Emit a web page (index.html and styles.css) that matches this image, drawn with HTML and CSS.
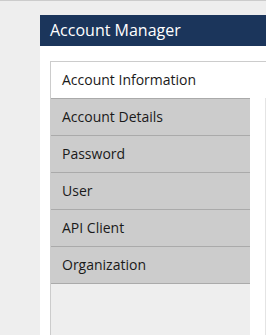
FILE: index.html
```html
<!DOCTYPE html>
<html lang="en">
<head>
    <meta charset="UTF-8">
    <title>Account Manager</title>
    <link rel="stylesheet" href="styles.css">
</head>
<body>
<div class="panel">
    <h3 class="panel-title">Account Manager</h3>
    <div class="panel-body">
        <div class="tabs">
            <ul class="tab-nav">
                <li class="active">Account Information</li>
                <li>Account Details</li>
                <li>Password</li>
                <li>User</li>
                <li>API Client</li>
                <li>Organization</li>
                <li class="filler"></li>
            </ul>
            <div class="tab-content"></div>
        </div>
    </div>
</div>
</body>
</html>
```

FILE: styles.css
```css
* {
    padding: 0;
    margin: 0;
}

html, body {
    height: 100%;
}

body {
    background-color: #eeeeee;
    border-top: 1px solid #cccccc;
    box-sizing: border-box;
    font-family: "Open Sans", "Liberation Sans", sans-serif;
    overflow: hidden;
    display: flex;
    flex-direction: column;
}

li {
    list-style: none;
}

.panel {
    flex: 1;
    margin: 14px 0 0 40px;
    background-color: #ffffff;
    display: flex;
    flex-direction: column;
}

.panel-title {
    height: 31px;
    line-height: 30px;
    padding-left: 10px;
    background-color: #1b355b;
    color: #ffffff;
    font-size: 16px;
    font-weight: normal;
}

.panel-body {
    flex: 1;
    display: flex;
    padding: 15px 0 0 10px;
}

.tabs {
    flex: 1;
    display: flex;
    border-top: 1px solid #cccccc;
    border-left: 1px solid #cccccc;
}

.tab-nav {
    width: 199px;
    display: flex;
    flex-direction: column;
}

.tab-nav li {
    height: 36px;
    line-height: 36px;
    padding-left: 11px;
    font-size: 14px;
    color: #1a1a1a;
    background-color: #cccccc;
    border-bottom: 1px solid #aaaaaa;
}

.tab-nav li.active {
    background-color: #ffffff;
}

.tab-nav li.filler {
    flex: 1;
    background-color: #eeeeee;
    border-bottom: none;
}

.tab-content {
    flex: 1;
    margin: 36px 0 0 15px;
    border-left: 1px solid #e4e4e4;
}
```
